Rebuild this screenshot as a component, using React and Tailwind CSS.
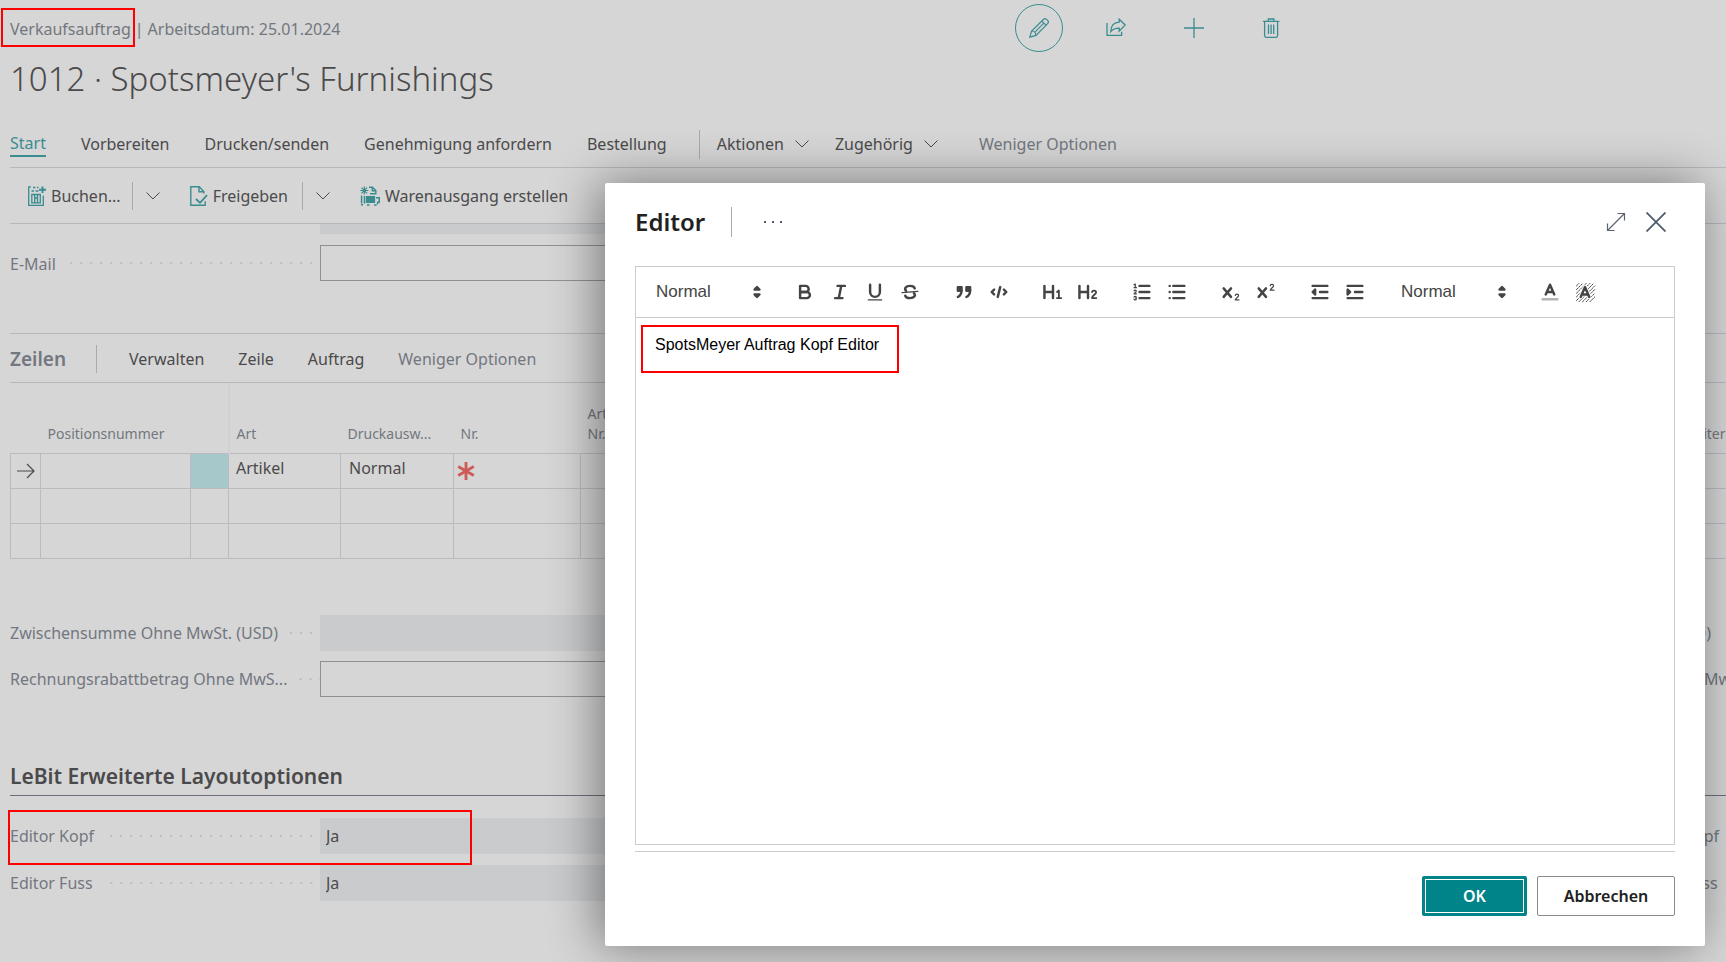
import React from "react";

function Icon({ children, className, viewBox = "0 0 20 20", width = 1 }) {
  return (
    <svg
      viewBox={viewBox}
      className={className}
      fill="none"
      stroke="currentColor"
      strokeWidth={width}
      aria-hidden="true"
    >
      {children}
    </svg>
  );
}

const Chevron = () => (
  <Icon viewBox="0 0 16 10" className="h-[10px] w-4 shrink-0">
    <path d="M1.5 1.5 8 8l6.5-6.5" />
  </Icon>
);

const Divider = ({ className = "" }) => (
  <span className={`w-px shrink-0 self-center bg-[#a9aaad] ${className}`} />
);

const Mark = ({ className }) => (
  <span className={`pointer-events-none absolute border-2 border-[#ff0000] ${className}`} />
);

function Dots() {
  return (
    <span className="h-[2px] flex-1 bg-[linear-gradient(to_right,#bdbec0_2px,transparent_2px)] bg-[length:10px_2px] bg-right bg-repeat-x" />
  );
}

function Field({ id, label, value = "", editable, aside, mark }) {
  return (
    <div className="relative flex h-9 items-center">
      <div className="flex w-[310px] shrink-0 items-center gap-[10px]">
        <label htmlFor={id} className="whitespace-nowrap pt-px text-[#73777f]">
          {label}
        </label>
        <Dots />
      </div>
      <input
        id={id}
        defaultValue={value}
        readOnly={!editable}
        className={
          editable
            ? "h-9 min-w-0 flex-1 border border-[#8f9197] bg-transparent px-[5px] text-[#4b4a4b] outline-none"
            : "h-9 min-w-0 flex-1 bg-[#c9cbcd] px-[6px] pt-px text-[#4b4a4b] outline-none"
        }
      />
      <div className="ml-[10px] flex w-[91px] shrink-0 items-center gap-3 overflow-hidden whitespace-nowrap pt-px text-[#73777f]">
        {aside}
      </div>
      {mark && <Mark className="-left-[2px] -top-2 h-[55px] w-[464px]" />}
    </div>
  );
}

function PageHeader() {
  return (
    <header>
      <div className="flex h-14 items-center">
        <div className="relative flex w-[1005px] gap-1 whitespace-nowrap pt-[2px] text-[#73777f]">
          <span>Verkaufsauftrag</span>
          <span>|</span>
          <span>Arbeitsdatum: 25.01.2024</span>
          <Mark className="-left-[9px] -top-[7px] h-[39px] w-[134px]" />
        </div>
        <div className="flex items-center text-[#3b8c91]">
          <button
            aria-label="Bearbeiten"
            className="flex size-12 items-center justify-center rounded-full border border-[#3b8c91]"
          >
            <Icon className="size-5" width={1.2}>
              <path d="M.8 19.2 2.6 13 14.4 1.5c.9-.9 2.3-.9 3.2-.1l1 1c.9.9.9 2.3 0 3.2L7 17.4.8 19.2Z" />
              <path d="m12.8 3.1 4.1 4.1M2.6 13c2.2 0 4.2 2 4.4 4.4M5.4 14.6l9.4-9.4" />
            </Icon>
          </button>
          <button aria-label="Teilen" className="ml-[43px] flex size-5 items-center justify-center">
            <Icon className="size-5" width={1.3}>
              <path d="M1 5v12.4h14.6v-3.6" />
              <path d="M4.8 13.6c2-2.6 4.4-3.5 8.4-3.5v3L19.2 7l-6-5.8v3C8 4.4 4.900 8 4.800 13.600Z" />
            </Icon>
          </button>
          <button aria-label="Neu" className="ml-[58px] flex size-5 items-center justify-center">
            <Icon className="size-5" width={1.3}>
              <path d="M10 0v20M0 10h20" />
            </Icon>
          </button>
          <button aria-label="Löschen" className="ml-[57px] flex size-5 items-center justify-center">
            <Icon className="size-5" width={1.3}>
              <path d="M2 3.400h16.400M7.300 3.200V1h5.600v2.200M3.600 3.600v14c0 1 .5 1.700 1.500 1.700h10c1 0 1.500-.7 1.500-1.700v-14M7.500 6.500v9.500M10.100 6.500v9.500M12.700 6.500v9.500" />
            </Icon>
          </button>
        </div>
      </div>
      <h1 className="pt-px text-[33px] font-light leading-[44px] text-[#4b4a4b]">
        1012 · Spotsmeyer's Furnishings
      </h1>
    </header>
  );
}

function Menu() {
  return (
    <nav className="mt-5 flex h-[47px] items-center border-b border-[#b7b8ba] whitespace-nowrap text-[#4b4a4b]">
      <div className="flex items-center gap-[35px]">
        <a href="#start" className="border-b-2 border-[#3b8c91] leading-6 text-[#3b8c91]">
          Start
        </a>
        <a href="#vorbereiten">Vorbereiten</a>
        <a href="#drucken">Drucken/senden</a>
        <a href="#genehmigung">Genehmigung anfordern</a>
        <a href="#bestellung">Bestellung</a>
      </div>
      <Divider className="ml-8 h-[29px]" />
      <button className="ml-[17px] flex items-center gap-[10px]">
        Aktionen <Chevron />
      </button>
      <button className="ml-[25px] flex items-center gap-[10px]">
        Zugehörig <Chevron />
      </button>
      <button className="ml-10 text-[#73777f]">Weniger Optionen</button>
    </nav>
  );
}

function Actions() {
  return (
    <div className="flex h-14 items-center border-b border-[#b7b8ba] pl-[18px] whitespace-nowrap text-[#4b4a4b]">
      <button className="flex items-center gap-[5px]">
        <Icon viewBox="0 0 18 20" className="h-5 w-[18px] text-[#3b8c91]" width={1.3}>
          <path d="M3 .8H.7v18.500h14.600V9.500M5 1.500h2.500M9 1.500h1.500M3.500 5h2.500M7.500 5h3" />
          <path d="M3.800 16.800V8.500h8.500v8.300Z M6.700 16.800V12h2.800v4.800M6.700 8.500V12M9.500 8.500V12" />
          <path d="M14.500.5v6.500M11 3.800h7" strokeWidth="2" />
        </Icon>
        Buchen...
      </button>
      <Divider className="ml-[11px] h-7" />
      <button aria-label="Weitere Buchungsaktionen" className="ml-3">
        <Chevron />
      </button>
      <button className="ml-[29px] flex items-center gap-[5px]">
        <Icon viewBox="0 0 18 20" className="h-5 w-[18px] text-[#3b8c91]" width={1.4}>
          <path d="M13.800 7.600V5.600L9.200.8H.8v18.400h14.400v-4" />
          <path d="M9 1v4.800h4.800" />
          <path d="m6 13 4 3.800 7-7.600" strokeWidth="1.800" />
        </Icon>
        Freigeben
      </button>
      <Divider className="ml-[14px] h-7" />
      <button aria-label="Weitere Freigabeaktionen" className="ml-3">
        <Chevron />
      </button>
      <button className="ml-[29px] flex items-center gap-[5px]">
        <Icon viewBox="0 0 20 20" className="size-5 text-[#3b8c91]" width={1.2}>
          <path d="M4.300.5v8M.3 4.500h8M1.500 1.700l5.600 5.600M7.100 1.700 1.500 7.300" />
          <path d="M9 1.200h3.500l3.300 3.300v3.300H10M12.300 1.400v3.300h3.400" strokeWidth="1.400" />
          <path d="M1.600 9.500v8M1 18.800h2M4.500 10v7.500" strokeWidth="1.500" />
          <path d="M6.500 10.500h8v6h-8Z" fill="currentColor" />
          <path d="M16 11.800h3.300v4.500H17M7 18.900h2.500M14 18.900h2.500M17.500 17v1.500" strokeWidth="1.500" />
        </Icon>
        Warenausgang erstellen
      </button>
    </div>
  );
}

function Lines() {
  const cell = "border border-[#b9bbbf] h-[35px] p-0 align-top";
  const head = "p-0 pb-[9px] pl-[7px] text-left align-bottom font-normal leading-5 whitespace-nowrap";
  return (
    <section>
      <div className="mt-[52px] flex h-[50px] items-center border-y border-[#b7b8ba] pt-[2px] whitespace-nowrap text-[#4b4a4b]">
        <h2 className="text-[19px] font-semibold text-[#73777f]">Zeilen</h2>
        <Divider className="ml-[30px] h-7" />
        <div className="ml-8 flex gap-[34px]">
          <button>Verwalten</button>
          <button>Zeile</button>
          <button>Auftrag</button>
          <button className="text-[#73777f]">Weniger Optionen</button>
        </div>
      </div>
      <table className="w-[calc(100%+2px)] table-fixed border-collapse text-[#4b4a4b]">
        <colgroup>
          <col className="w-[30px]" />
          <col className="w-[150px]" />
          <col className="w-[38px]" />
          <col className="w-[112px]" />
          <col className="w-[113px]" />
          <col className="w-[127px]" />
          <col />
          <col className="w-[52px]" />
        </colgroup>
        <thead className="text-sm text-[#73777f]">
          <tr className="h-[70px]">
            <th className={head} />
            <th className={head}>Positionsnummer</th>
            <th className={`${head} border-r-2 border-[#cfd0d1]`} />
            <th className={head}>Art</th>
            <th className={head}>Druckausw...</th>
            <th className={head}>Nr.</th>
            <th className={head}>
              Art.
              <br />
              Nr.
            </th>
            <th className={head}>Weiter</th>
          </tr>
        </thead>
        <tbody>
          <tr>
            <td className={cell}>
              <Icon viewBox="0 0 18 18" className="ml-[6px] mt-2 size-[18px]" width={1.2}>
                <path d="M0 9h16.500M10 2l7 7-7 7" />
              </Icon>
            </td>
            <td className={cell} />
            <td className={`${cell} bg-[#a7c8ca]`} />
            <td className={`${cell} pl-[7px] leading-7`}>Artikel</td>
            <td className={`${cell} pl-2 leading-7`}>Normal</td>
            <td className={cell}>
              <Icon viewBox="0 0 18 18" className="ml-[3px] mt-2 size-[18px] text-[#cd5c57]" width={2.8}>
                <path d="M9 0v18M1.200 4.500l15.600 9M16.800 4.500l-15.600 9" />
              </Icon>
            </td>
            <td className={cell} />
            <td className={cell} />
          </tr>
          {[1, 2].map((row) => (
            <tr key={row}>
              {[0, 1, 2, 3, 4, 5, 6, 7].map((col) => (
                <td key={col} className={cell} />
              ))}
            </tr>
          ))}
        </tbody>
      </table>
    </section>
  );
}

const toolGroups = [
  [
    ["Fett", <><path d="M5 4h4.500a2.500 2.500 0 0 1 0 5H5Z" /><path d="M5 9h5.500a2.500 2.500 0 0 1 0 5H5Z" /></>],
    ["Kursiv", <path d="M7 4h6M5 14h6M8 14l2-10" />],
    ["Unterstrichen", <><path d="M5 3v6a4 4 0 0 0 8 0V3" /><path d="M3.500 15.500h11" strokeWidth="1" /></>],
    [
      "Durchgestrichen",
      <>
        <path d="M15.500 8.500l-13 1" strokeWidth="1" />
        <path d="M5.800 8C4 6.200 5.600 4 9 4c2 0 3.600.8 3.900 2M12.200 10c1.800 1.800.2 4-3.200 4-2 0-3.600-.8-3.900-2" />
      </>,
    ],
  ],
  [
    [
      "Zitat",
      <g fill="currentColor">
        <path d="M4 5h3v3H4ZM11 5h3v3h-3Z" />
        <path d="M7 8c0 4.031-3 5-3 5M14 8c0 4.031-3 5-3 5" />
      </g>,
    ],
    ["Code", <path d="M5 7 3 9l2 2M13 7l2 2-2 2M10 5l-2 8" />],
  ],
  [
    ["Überschrift 1", <><path d="M2 4v10M9 4v10M2 9h7" /><path d="m12.300 9 1.500-1.200V14M12.200 14h3.600" strokeWidth="1.500" /></>],
    ["Überschrift 2", <><path d="M2 4v10M9 4v10M2 9h7" /><path d="M12.300 9c.4-1.700 3.600-1.500 3.300.5-.2 1.500-3.300 2.300-3.300 4.500h3.500" strokeWidth="1.500" /></>],
  ],
  [
    [
      "Nummerierte Liste",
      <>
        <path d="M7 4h8M7 9h8M7 14h8" />
        <path
          d="m2.500 3 1-.5v3M2.500 5.500h2M4.500 10.500h-2c0-.234 1.850-1.076 1.850-2.234a.959.959 0 0 0-1.850-.11M2.500 14.846a.959.959 0 0 0 1.850-.109.700.700 0 0 0-.6-.737.688.688 0 0 0 .6-.736.959.959 0 0 0-1.850-.109"
          strokeWidth="1"
        />
      </>,
    ],
    ["Aufzählung", <path d="M6 4h9M6 9h9M6 14h9M3 4h0M3 9h0M3 14h0" />],
  ],
  [
    ["Tiefgestellt", <><path d="m3 6 6 7M9 6l-6 7" /><path d="M12.500 11.800c.3-1.500 2.800-1.300 2.700.2-.2 1.500-2.700 2-2.700 3.500h3" strokeWidth="1" /></>],
    ["Hochgestellt", <><path d="m3 6 6 7M9 6l-6 7" /><path d="M12.500 3.800c.3-1.500 2.800-1.300 2.700.2-.2 1.500-2.700 2-2.700 3.500h3" strokeWidth="1" /></>],
  ],
  [
    ["Einzug verkleinern", <><path d="M3 14h12M3 4h12M9 9h6" /><path d="M5 7v4L3 9Z" fill="currentColor" /></>],
    ["Einzug vergrößern", <><path d="M3 14h12M3 4h12M9 9h6" /><path d="M3 7v4l2-2Z" fill="currentColor" /></>],
  ],
];

const colorTools = [
  ["Textfarbe", <><path d="M3 15h12" opacity=".4" /><path d="M5.500 11 9 3l3.500 8M11.630 9H6.380" /></>],
  [
    "Hintergrundfarbe",
    <>
      <path
        d="M2 4l2-2M2 7l5-5M2 10l8-8M2 13 13 2M2 16 16 2M4 17 17 4M7 17 17 7M10 17l7-7M13 17l4-4"
        strokeWidth=".8"
        strokeDasharray="1.500 1"
      />
      <path d="M5.500 13 9 5l3.500 8M11.630 11H6.380" stroke="#fff" strokeWidth="3.500" />
      <path d="M5.500 13 9 5l3.500 8M11.630 11H6.380" />
    </>,
  ],
];

function Tool({ name, children }) {
  return (
    <button
      aria-label={name}
      className="flex h-[30px] w-[35px] items-center justify-center"
    >
      <svg
        viewBox="0 0 18 18"
        className="size-[22px]"
        fill="none"
        stroke="currentColor"
        strokeWidth="2"
        strokeLinecap="round"
        strokeLinejoin="round"
        aria-hidden="true"
      >
        {children}
      </svg>
    </button>
  );
}

function Picker({ name }) {
  return (
    <div className="relative w-[122px] shrink-0">
      <select
        aria-label={name}
        className="h-[30px] w-full appearance-none bg-transparent pl-[10px] font-['Liberation_Sans',Arial,sans-serif] text-[17px] text-[#444] outline-none"
      >
        <option>Normal</option>
      </select>
      <svg
        viewBox="0 0 18 18"
        className="pointer-events-none absolute right-0 top-1 size-[22px]"
        fill="currentColor"
        stroke="currentColor"
        strokeWidth="2"
        strokeLinejoin="round"
        aria-hidden="true"
      >
        <path d="m7 11 2 2 2-2ZM7 7l2-2 2 2Z" />
      </svg>
    </div>
  );
}

function EditorDialog() {
  return (
    <div
      role="dialog"
      aria-labelledby="dialog-title"
      className="absolute bottom-4 left-[605px] right-[21px] top-[183px] flex flex-col rounded-[2px] bg-white px-[30px] pb-[30px] pt-6 shadow-[-6px_0_50px_rgba(0,0,0,0.45)]"
    >
      <div className="flex h-[30px] items-center">
        <h2 id="dialog-title" className="text-2xl font-semibold text-[#212121]">
          Editor
        </h2>
        <Divider className="ml-[26px] h-[30px]" />
        <button aria-label="Weitere Aktionen" className="ml-8 flex items-center gap-[6px]">
          <span className="size-[2px] bg-[#505c6d]" />
          <span className="size-[2px] bg-[#505c6d]" />
          <span className="size-[2px] bg-[#505c6d]" />
        </button>
        <button aria-label="Vergrößern" className="ml-auto text-[#5c6470]">
          <Icon className="size-5" width={1.2}>
            <path d="M1.500 18.500l17-17M11.500 1.500h7v7M1.500 11.500v7h7" />
          </Icon>
        </button>
        <button aria-label="Schließen" className="ml-5 mr-[9px] text-[#505c6d]">
          <Icon className="size-5" width={1.8}>
            <path d="m.5.500 19 19M19.500.500l-19 19" />
          </Icon>
        </button>
      </div>

      <div className="mt-[29px] flex flex-1 flex-col border border-[#ccc]">
        <div className="flex h-[51px] shrink-0 items-center gap-[19px] border-b border-[#ccc] px-[10px] text-[#444]">
          <Picker name="Überschrift" />
          {toolGroups.map((group) => (
            <div key={group[0][0]} className="flex">
              {group.map(([name, drawing]) => (
                <Tool key={name} name={name}>
                  {drawing}
                </Tool>
              ))}
            </div>
          ))}
          <Picker name="Größe" />
          <div className="flex">
            {colorTools.map(([name, drawing]) => (
              <Tool key={name} name={name}>
                {drawing}
              </Tool>
            ))}
          </div>
        </div>
        <div className="relative flex flex-1">
          <textarea
            aria-label="Text"
            defaultValue="SpotsMeyer Auftrag Kopf Editor"
            className="flex-1 resize-none px-[19px] py-[15px] font-['Liberation_Sans',Arial,sans-serif] text-base text-black outline-none"
          />
          <Mark className="left-[5px] top-[7px] h-12 w-[258px]" />
        </div>
      </div>

      <div className="mt-[6px] flex justify-end gap-[10px] border-t border-[#ccc] pt-6 font-semibold">
        <button className="h-10 w-[105px] rounded-[2px] bg-[#00848a] p-[3px] text-white">
          <span className="flex h-full items-center justify-center border border-white">OK</span>
        </button>
        <button className="h-10 w-[138px] rounded-[2px] border border-[#8a8a8a] text-[#212121]">
          Abbrechen
        </button>
      </div>
    </div>
  );
}

export default function App() {
  return (
    <div className="relative min-h-screen overflow-hidden bg-[#d6d6d6] pb-4 pl-[10px] font-['Noto_Sans','Open_Sans',sans-serif] text-base">
      <PageHeader />
      <Menu />
      <Actions />
      <div className="mb-[11px] ml-[310px] mr-[101px] h-[10px] bg-[#c9cbcd]" />
      <Field id="email" label="E-Mail" editable />
      <Lines />
      <div className="mt-14 flex flex-col gap-[10px]">
        <Field
          id="subtotal"
          label="Zwischensumme Ohne MwSt. (USD)"
          aside={
            <>
              <span className="w-[76px] text-right">(USD)</span>
              <Dots />
            </>
          }
        />
        <Field
          id="discount"
          label="Rechnungsrabattbetrag Ohne MwS..."
          editable
          aside={<span className="pl-[69px]">Mw</span>}
        />
      </div>
      <section>
        <h2 className="mt-[62px] border-b border-[#6b6f7a] pb-1 pt-[2px] text-[21px] font-semibold leading-[30px] text-[#4b4a4b]">
          LeBit Erweiterte Layoutoptionen
        </h2>
        <div className="mt-[22px] flex flex-col gap-[11px]">
          <Field id="kopf" label="Editor Kopf" value="Ja" aside="Editor Kopf" mark />
          <Field id="fuss" label="Editor Fuss" value="Ja" aside="Editor Fuss" />
        </div>
      </section>
      <EditorDialog />
    </div>
  );
}
